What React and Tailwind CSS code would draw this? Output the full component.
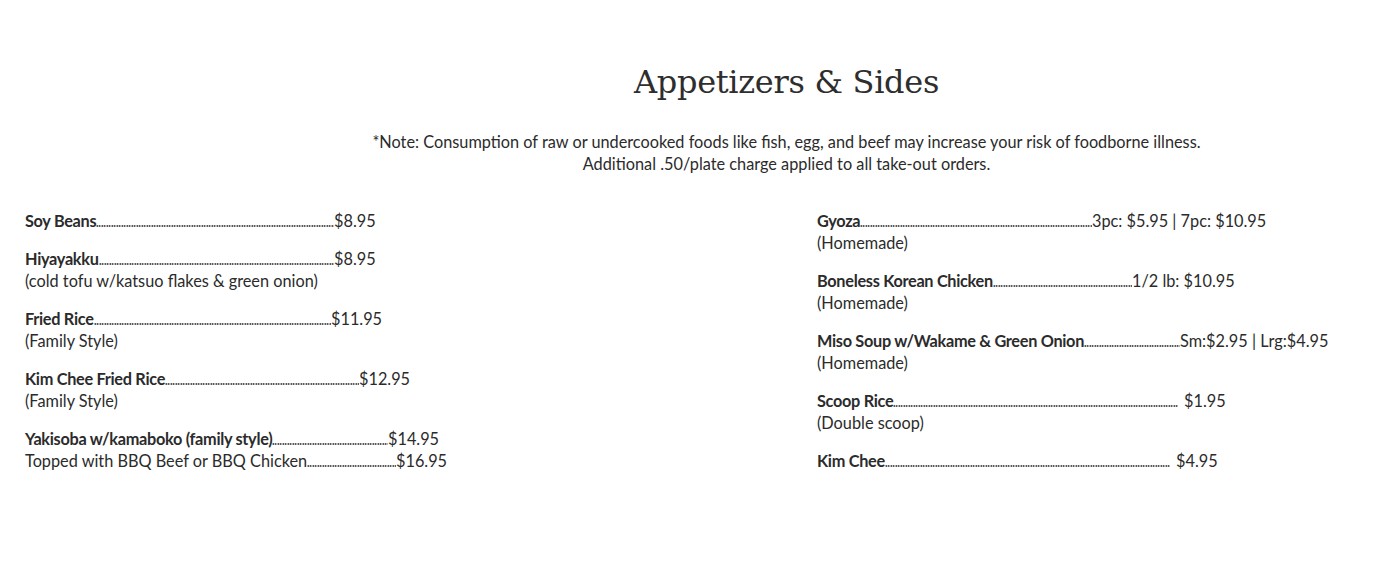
import React from 'react';

// Appetizers & Sides menu section

const leftItems = [
  { name: 'Soy Beans', price: '$8.95', w: 309 },
  { name: 'Hiyayakku', price: '$8.95', w: 309, note: '(cold tofu w/katsuo flakes & green onion)' },
  { name: 'Fried Rice', price: '$11.95', w: 306, note: '(Family Style)' },
  { name: 'Kim Chee Fried Rice', price: '$12.95', w: 334, note: '(Family Style)' },
  {
    name: 'Yakisoba w/kamaboko (family style)',
    price: '$14.95',
    w: 363,
    sub: { name: 'Topped with BBQ Beef or BBQ Chicken', price: '$16.95', w: 371 },
  },
];

const rightItems = [
  { name: 'Gyoza', price: '3pc: $5.95 | 7pc: $10.95', w: 275, note: '(Homemade)' },
  { name: 'Boneless Korean Chicken', price: '1/2 lb: $10.95', w: 315, note: '(Homemade)' },
  { name: 'Miso Soup w/Wakame & Green Onion', price: 'Sm:$2.95 | Lrg:$4.95', w: 363, note: '(Homemade)' },
  { name: 'Scoop Rice', price: '$1.95', w: 361, gap: true, note: '(Double scoop)' },
  { name: 'Kim Chee', price: '$4.95', w: 353, gap: true },
];

const Leader = ({ name, price, w, bold = true, gap }) => (
  <div className="flex items-baseline whitespace-nowrap">
    <div className="flex items-baseline" style={{ width: w }}>
      <span className={bold ? 'font-bold tracking-[-0.3px]' : ''}>{name}</span>
      <span className="flex-1 h-[2px] bg-[radial-gradient(circle,#2e2e2e_50%,transparent_65%)] bg-[length:2.5px_2px] bg-repeat-x" />
    </div>
    <span className={gap ? 'pl-[6px]' : ''}>{price}</span>
  </div>
);

const Item = ({ item }) => (
  <div className="leading-[22px]">
    <Leader name={item.name} price={item.price} w={item.w} gap={item.gap} />
    {item.sub && <Leader name={item.sub.name} price={item.sub.price} w={item.sub.w} bold={false} />}
    {item.note && <div>{item.note}</div>}
  </div>
);

export default function App() {
  return (
    <div className="w-[1375px] h-[577px] bg-white text-[#2b2b2b] font-['Lato',sans-serif] text-[16.3px]">
      {/* Header */}
      <div className="pl-[198px] pt-[58px] text-center">
        <h1 className="font-['DejaVu_Serif',serif] text-[32px] leading-[48px] text-[#2e2e2e] tracking-[-0.3px]">
          Appetizers &amp; Sides
        </h1>
        <p className="mt-[25px] leading-[22px]">
          *Note: Consumption of raw or undercooked foods like fish, egg, and beef may increase your risk of foodborne illness.
          <br />
          Additional .50/plate charge applied to all take-out orders.
        </p>
      </div>

      {/* Menu columns */}
      <div className="mt-[35px] grid grid-cols-[792px_1fr] pl-[25px]">
        <div className="flex flex-col gap-[16px]">
          {leftItems.map((it) => (
            <Item key={it.name} item={it} />
          ))}
        </div>
        <div className="flex flex-col gap-[16px]">
          {rightItems.map((it) => (
            <Item key={it.name} item={it} />
          ))}
        </div>
      </div>
    </div>
  );
}
